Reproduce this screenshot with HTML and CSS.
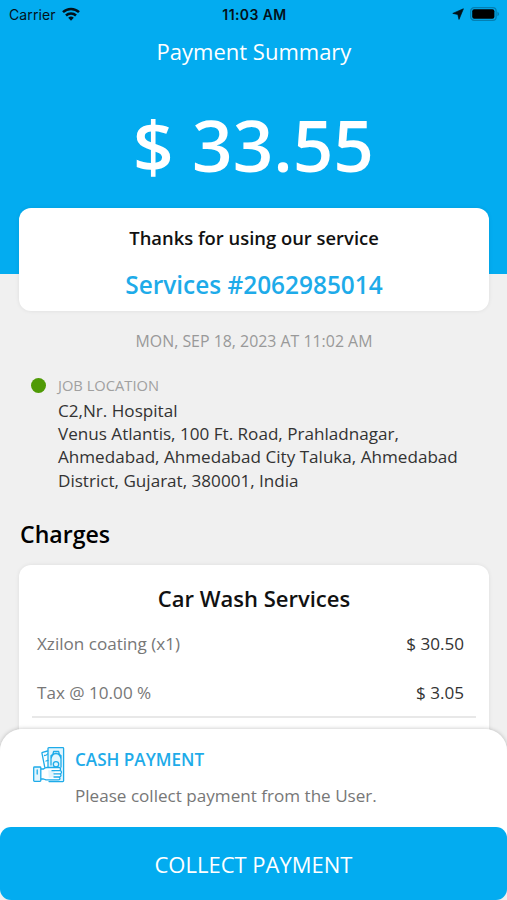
FILE: index.html
```html
<!DOCTYPE html>
<html lang="en">
<head>
<meta charset="utf-8">
<title>Payment Summary</title>
<link rel="stylesheet" href="styles.css">
</head>
<body>
<div class="screen">
  <header class="hero">
    <div class="status">
      <div class="status-left">
        <span class="carrier">Carrier</span>
        <svg class="wifi" viewBox="0 0 18 14" width="18" height="14">
          <g fill="none" stroke="#03121a" stroke-width="2.5">
            <path d="M1 5.2a11.6 11.6 0 0 1 16 0"/>
            <path d="M4 8.5a7.2 7.2 0 0 1 10 0"/>
          </g>
          <path d="M9 13.7 6.2 10.8a4 4 0 0 1 5.6 0z" fill="#03121a"/>
        </svg>
      </div>
      <span class="clock">11:03 AM</span>
      <div class="status-right">
        <svg class="arrow" viewBox="0 0 12 12" width="12" height="12"><path d="M11.400.8 7 11.400 5.800 6.400.8 5.400z" fill="#03121a" stroke="#03121a" stroke-width=".7"/></svg>
        <svg class="battery" viewBox="0 0 30 14" width="30" height="14">
          <rect x=".7" y=".7" width="25.4" height="12.6" rx="3.4" fill="none" stroke="#037fb3" stroke-width="1.3"/>
          <rect x="2.2" y="2.2" width="22.2" height="9.6" rx="2" fill="#000"/>
          <path d="M27.4 4.8v4.4c1-.4 1.7-1.200 1.700-2.200s-.7-1.800-1.700-2.200z" fill="#037fb3"/>
        </svg>
      </div>
    </div>
    <h1 class="title">Payment Summary</h1>
    <div class="amount">$ 33.55</div>
  </header>

  <section class="card thanks">
    <p class="thanks-text">Thanks for using our service</p>
    <p class="service-id">Services #2062985014</p>
  </section>

  <p class="date">MON, SEP 18, 2023 AT 11:02 AM</p>

  <section class="location">
    <span class="dot"></span>
    <div class="location-body">
      <div class="label">JOB LOCATION</div>
      <div class="address">C2,Nr. Hospital<br>Venus Atlantis, 100 Ft. Road, Prahladnagar,<br>Ahmedabad, Ahmedabad City Taluka, Ahmedabad<br>District, Gujarat, 380001, India</div>
    </div>
  </section>

  <h2 class="heading">Charges</h2>
  <section class="card charges">
    <h3 class="charges-title">Car Wash Services</h3>
    <div class="row"><span>Xzilon coating (x1)</span><span class="price">$ 30.50</span></div>
    <div class="row"><span>Tax @ 10.00 %</span><span class="price">$ 3.05</span></div>
    <div class="rule"></div>
  </section>

  <footer class="sheet">
    <div class="method">
      <svg class="cash" viewBox="0 0 32 36" width="32" height="36" fill="none" stroke="#1eabe9" stroke-width="1.3" stroke-linejoin="round" stroke-linecap="round">
        <path d="M15 20V1.500q0-.8.800-.8h14q.8 0 .8.800v32.300q0 .8-.8.800H16" fill="#e2f5fd"/>
        <path d="M14.500 4 9.600 5.300q-.8.200-.6 1L11.700 20M11.500 8.500q2 0 3-1.500M13 14l2-.6"/>
        <path d="M18 18V8.500q2.300-.8 2.600-4h5q.300 3.200 2.400 4V20M18 12q1-5.500 5-5.500t5 5.500"/>
        <circle cx="23" cy="17.300" r="2.700"/>
        <path d="M7.800 22h2.700q1.500-1.500 3.500-1.500h12q1.600 0 1.600 1.600t-1.600 1.600H19M22 23.700h5q1.500 0 1.500 1.500t-1.500 1.600h-6M22 26.800h4.500q1.500 0 1.500 1.500T26.500 30H21M22 30h3.500q1.500 0 1.500 1.400t-1.500 1.500H13L10.500 32H7.800" fill="#fff"/>
        <path d="M1.500 20H7q.8 0 .8.800v12.700q0 .8-.8.800H1.500q-.8 0-.8-.8V20.800q0-.8.800-.8zM4.200 23v4" fill="#e2f5fd"/>
      </svg>
      <div>
        <div class="method-name">CASH PAYMENT</div>
        <div class="method-note">Please collect payment from the User.</div>
      </div>
    </div>
    <button class="collect">COLLECT PAYMENT</button>
  </footer>
</div>
</body>
</html>
```
FILE: styles.css
```css
* { box-sizing: border-box; }
body { margin: 0; font-family: "Open Sans", "Noto Sans", sans-serif; }
h1, h2, h3, p { margin: 0; }
.screen {
  position: relative;
  height: 900px;
  overflow: hidden;
  background: #f0f0f0;
}
.hero {
  height: 274px;
  background: #03acf0;
  color: #fff;
  text-align: center;
}
.status {
  display: grid;
  grid-template-columns: 1fr auto 1fr;
  align-items: center;
  height: 28px;
  padding: 0 7px 0 9px;
  font-family: Inter, sans-serif;
  color: #03121a;
}
.status-left { display: flex; align-items: center; gap: 6px; }
.status-right { display: flex; align-items: center; justify-content: flex-end; gap: 6px; }
.carrier { font-size: 14px; letter-spacing: .1px; }
.clock { font-size: 14px; font-weight: 600; letter-spacing: .4px; }
.title {
  margin-top: 8px;
  padding-left: 1px;
  font-size: 22px;
  font-weight: 400;
  line-height: 30px;
}
.amount {
  margin-top: 30px;
  font-size: 71px;
  font-weight: 600;
  line-height: 97px;
}
.card {
  margin: 0 18px 0 19px;
  background: #fff;
  border-radius: 12px;
  box-shadow: 0 0 4px rgba(0, 0, 0, .08);
}
.thanks {
  height: 103px;
  margin-top: -66px;
  padding-top: 17px;
  text-align: center;
}
.thanks-text { font-size: 18.400px; font-weight: 600; line-height: 26px; color: #111; }
.service-id { margin-top: 18px; font-size: 24.400px; font-weight: 600; line-height: 32px; color: #1eabe9; }
.date { margin-top: 18px; padding-left: 1px; font-size: 15.900px; line-height: 24px; text-align: center; color: #999; }
.location { display: flex; gap: 12px; margin: 21px 20px 0 31px; }
.dot { flex: none; width: 15px; height: 15px; margin-top: 4px; border-radius: 50%; background: #4f9a06; }
.label { font-size: 14.700px; line-height: 23px; color: #a0a0a0; }
.address { font-size: 17.100px; line-height: 23.200px; color: #333; white-space: nowrap; margin-top: 2px; }
.heading { margin: 26px 0 0 20px; font-size: 23.100px; font-weight: 600; line-height: 32px; }
.charges { height: 300px; margin-top: 15px; padding-top: 18px; }
.charges-title { font-size: 22px; font-weight: 600; line-height: 30px; text-align: center; color: #111; }
.row {
  display: flex;
  justify-content: space-between;
  margin: 19px 25px 0 18px;
  font-size: 17.100px;
  line-height: 24px;
  color: #777;
}
.row + .row { margin-top: 25px; }
.price { color: #333; }
.rule { height: 2px; margin: 11px 13px 0 13px; background: #e8e8e8; }
.sheet {
  position: absolute;
  left: 0;
  right: 0;
  bottom: 0;
  height: 171px;
  display: flex;
  flex-direction: column;
  justify-content: space-between;
  background: linear-gradient(#fff 150px, #f0f0f0 150px);
  border-radius: 22px 22px 0 0;
  box-shadow: 0 0 4px rgba(0, 0, 0, .25);
}
.method { display: flex; gap: 10px; padding: 18px 0 0 33px; }
.method-name { margin-top: 1px; font-size: 17.100px; font-weight: 600; line-height: 24px; color: #1eabe9; }
.method-note { margin-top: 12px; font-size: 17.100px; line-height: 24px; color: #777; }
.collect {
  height: 73px;
  padding: 0;
  border: 0;
  border-radius: 11px;
  background: #03acf0;
  color: #fff;
  font: 400 22px/30px "Open Sans", "Noto Sans", sans-serif;
}
```
